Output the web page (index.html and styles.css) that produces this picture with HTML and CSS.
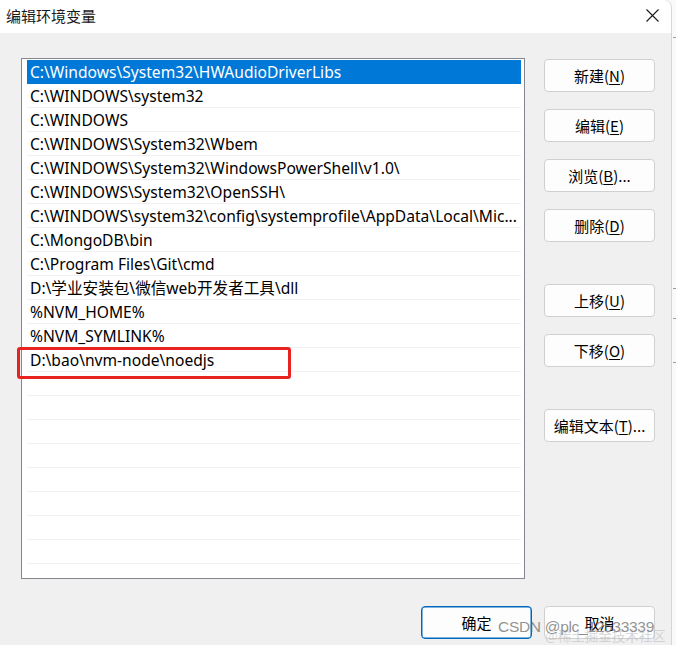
FILE: index.html
```html
<!DOCTYPE html>
<html lang="zh-CN">
<head>
<meta charset="utf-8">
<title>编辑环境变量</title>
<link rel="stylesheet" href="styles.css">
</head>
<body>
<div class="screen">
  <div class="window">
    <div class="titlebar">
      <span class="title">编辑环境变量</span>
      <span class="close">
        <svg width="13" height="13" viewBox="0 0 13 13"><path d="M0.5 0.5 L12.5 12.5 M12.5 0.5 L0.5 12.5" stroke="#1a1a1a" stroke-width="1.1" fill="none"/></svg>
      </span>
    </div>
    <div class="main">
      <div class="list">
        <div class="row selected">C:\Windows\System32\HWAudioDriverLibs</div>
        <div class="row">C:\WINDOWS\system32</div>
        <div class="row">C:\WINDOWS</div>
        <div class="row">C:\WINDOWS\System32\Wbem</div>
        <div class="row">C:\WINDOWS\System32\WindowsPowerShell\v1.0\</div>
        <div class="row">C:\WINDOWS\System32\OpenSSH\</div>
        <div class="row">C:\WINDOWS\system32\config\systemprofile\AppData\Local\Mic...</div>
        <div class="row">C:\MongoDB\bin</div>
        <div class="row">C:\Program Files\Git\cmd</div>
        <div class="row">D:\学业安装包\微信web开发者工具\dll</div>
        <div class="row">%NVM_HOME%</div>
        <div class="row">%NVM_SYMLINK%</div>
        <div class="row">D:\bao\nvm-node\noedjs</div>
        <div class="row"></div>
        <div class="row"></div>
        <div class="row"></div>
        <div class="row"></div>
        <div class="row"></div>
        <div class="row"></div>
        <div class="row"></div>
        <div class="row"></div>
        <div class="row"></div>
        <div class="mark"></div>
      </div>
      <div class="side">
        <div class="group">
          <button class="btn">新建(<u>N</u>)</button>
          <button class="btn">编辑(<u>E</u>)</button>
          <button class="btn">浏览(<u>B</u>)...</button>
          <button class="btn">删除(<u>D</u>)</button>
        </div>
        <div class="group">
          <button class="btn">上移(<u>U</u>)</button>
          <button class="btn">下移(<u>O</u>)</button>
        </div>
        <div class="group">
          <button class="btn">编辑文本(<u>T</u>)...</button>
        </div>
      </div>
    </div>
    <div class="footer">
      <button class="btn default">确定</button>
      <button class="btn">取消</button>
    </div>
    <div class="wm-under">@稀土掘金技术社区</div>
    <div class="wm">CSDN @plc_12533339</div>
  </div>
  <div class="strip">
    <div class="sline l1"></div>
    <div class="sline l2"></div>
    <div class="sline l3"></div>
    <div class="sline l4"></div>
  </div>
</div>
</body>
</html>
```

FILE: styles.css
```css
html, body {
  margin: 0;
  padding: 0;
  background: #f7f7f7;
}
body {
  font-family: "Noto Sans", "Noto Sans CJK SC", sans-serif;
  color: #000;
}
.screen {
  display: flex;
  width: 676px;
  height: 645px;
  overflow: hidden;
}
.window {
  position: relative;
  width: 671px;
  height: 645px;
  background: #f0f0f0;
  border-right: 1px solid #d6d6d6;
  border-top-right-radius: 8px;
  display: flex;
  flex-direction: column;
  flex-shrink: 0;
}
.titlebar {
  height: 33px;
  background: #ffffff;
  border-top-right-radius: 8px;
  display: flex;
  align-items: center;
  justify-content: space-between;
  padding: 0 12px 0 6px;
  box-sizing: border-box;
}
.title {
  font-family: "Noto Sans CJK SC", sans-serif;
  font-size: 15px;
  color: #1a1a1a;
  margin-top: -2px;
}
.close {
  display: flex;
  margin-top: -3px;
}
.main {
  display: flex;
  padding: 25px 0 0 21px;
  gap: 19px;
}
.list {
  position: relative;
  width: 493px;
  height: 518px;
  background: #ffffff;
  border: 1px solid #828790;
  padding: 1px 5px 0 4px;
  box-sizing: content-box;
}
.row {
  height: 23px;
  border-bottom: 1px solid #f0f0f0;
  padding-left: 3px;
  font-size: 15.6px;
  line-height: 24px;
  white-space: nowrap;
  overflow: hidden;
  margin-left: 1px;
  margin-right: -2px;
}
.list > .row:nth-child(22) {
  height: 14px;
  border-bottom: none;
}
.row.selected {
  background: #0078d7;
  border-bottom-color: #0078d7;
  color: #ffffff;
}
.mark {
  position: absolute;
  left: -5px;
  top: 288px;
  width: 268px;
  height: 26px;
  border: 3px solid #e8231f;
  border-radius: 3px;
}
.side {
  display: flex;
  flex-direction: column;
  gap: 42px;
  padding-top: 1px;
}
.group {
  display: flex;
  flex-direction: column;
  gap: 17px;
}
.btn {
  width: 111px;
  height: 33px;
  background: #fdfdfd;
  border: 1px solid #d0d0d0;
  border-radius: 4px;
  font-family: "Noto Sans CJK SC", sans-serif;
  font-size: 15px;
  color: #000;
  padding: 0;
  box-sizing: border-box;
}
.btn u {
  text-underline-offset: 2px;
}
.footer {
  display: flex;
  justify-content: flex-end;
  gap: 12px;
  padding: 27px 16px 0 0;
}
.btn.default {
  border: 1px solid #0067c0;
  box-shadow: inset 0 0 0 0.5px #0067c0;
}
.wm {
  position: absolute;
  left: 498px;
  top: 618px;
  font-family: "Liberation Sans", sans-serif;
  font-size: 15.5px;
  letter-spacing: -0.3px;
  color: rgba(110, 110, 110, 0.75);
  white-space: nowrap;
}
.wm-under {
  position: absolute;
  left: 545px;
  top: 625px;
  font-family: "Noto Sans CJK SC", sans-serif;
  font-size: 13.5px;
  color: rgba(170, 170, 170, 0.45);
  white-space: nowrap;
}
.strip {
  position: relative;
  flex: 1;
  background: #f9f9f9;
}
.sline {
  position: absolute;
  left: 1px;
  right: 0;
  height: 1px;
  background: #9a9a9a;
}
.l1 { top: 37px; }
.l2 { top: 288px; }
.l3 { top: 318px; }
.l4 { top: 362px; }
```
